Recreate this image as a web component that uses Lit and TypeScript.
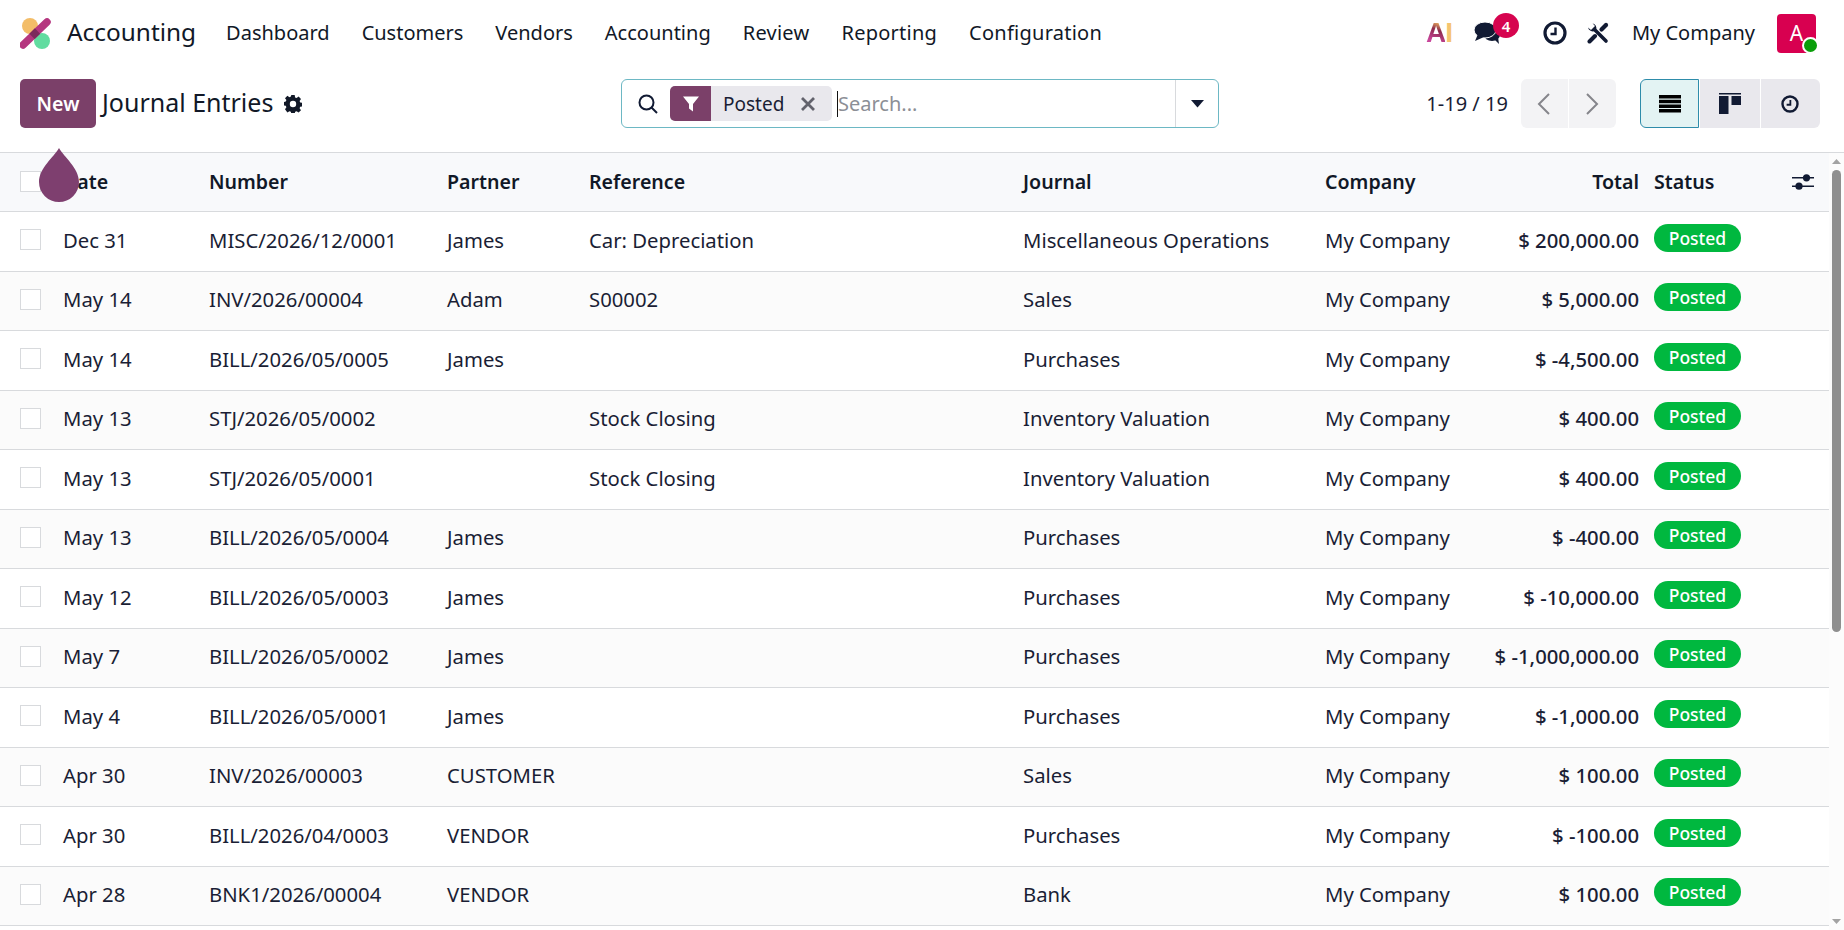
import { LitElement, html, css } from 'lit';
import { customElement } from 'lit/decorators.js';

interface Entry {
  date: string;
  number: string;
  partner: string;
  reference: string;
  journal: string;
  total: string;
}

const NAV_ITEMS = ['Dashboard', 'Customers', 'Vendors', 'Accounting', 'Review', 'Reporting', 'Configuration'];

const ENTRIES: Entry[] = [
  { date: 'Dec 31', number: 'MISC/2026/12/0001', partner: 'James', reference: 'Car: Depreciation', journal: 'Miscellaneous Operations', total: '$ 200,000.00' },
  { date: 'May 14', number: 'INV/2026/00004', partner: 'Adam', reference: 'S00002', journal: 'Sales', total: '$ 5,000.00' },
  { date: 'May 14', number: 'BILL/2026/05/0005', partner: 'James', reference: '', journal: 'Purchases', total: '$ -4,500.00' },
  { date: 'May 13', number: 'STJ/2026/05/0002', partner: '', reference: 'Stock Closing', journal: 'Inventory Valuation', total: '$ 400.00' },
  { date: 'May 13', number: 'STJ/2026/05/0001', partner: '', reference: 'Stock Closing', journal: 'Inventory Valuation', total: '$ 400.00' },
  { date: 'May 13', number: 'BILL/2026/05/0004', partner: 'James', reference: '', journal: 'Purchases', total: '$ -400.00' },
  { date: 'May 12', number: 'BILL/2026/05/0003', partner: 'James', reference: '', journal: 'Purchases', total: '$ -10,000.00' },
  { date: 'May 7', number: 'BILL/2026/05/0002', partner: 'James', reference: '', journal: 'Purchases', total: '$ -1,000,000.00' },
  { date: 'May 4', number: 'BILL/2026/05/0001', partner: 'James', reference: '', journal: 'Purchases', total: '$ -1,000.00' },
  { date: 'Apr 30', number: 'INV/2026/00003', partner: 'CUSTOMER', reference: '', journal: 'Sales', total: '$ 100.00' },
  { date: 'Apr 30', number: 'BILL/2026/04/0003', partner: 'VENDOR', reference: '', journal: 'Purchases', total: '$ -100.00' },
  { date: 'Apr 28', number: 'BNK1/2026/00004', partner: 'VENDOR', reference: '', journal: 'Bank', total: '$ 100.00' },
];

const clockIcon = (size: number) => html`
  <svg width=${size} height=${size} viewBox="0 0 24 24" fill="none" stroke="currentColor">
    <circle cx="12" cy="12" r="10" stroke-width="3.2" />
    <path d="M12.5 6.5v6.5H7.5" stroke-width="2.4" />
  </svg>
`;

@customElement('app-root')
export class AppRoot extends LitElement {
  static styles = css`
    :host {
      display: flex;
      flex-direction: column;
      height: 100vh;
      overflow: hidden;
      position: relative;
      background: #fff;
      color: #1a1e35;
      font-family: 'Noto Sans', 'Open Sans', sans-serif;
      font-size: 20px;
    }

    .navbar {
      flex: none;
      height: 66px;
      display: flex;
      align-items: center;
      padding: 0 28px 0 20px;
      color: #111827;
    }

    .logo {
      width: 32px;
      height: 32px;
      margin-top: 1px;
    }

    .app-name {
      margin: 0 30px 3px 15px;
      font-size: 24.4px;
    }

    .nav {
      display: flex;
      gap: 32px;
      margin-bottom: 2px;
    }

    .nav span:nth-child(n + 5) {
      letter-spacing: 0.25px;
    }

    .systray {
      margin-left: auto;
      display: flex;
      align-items: center;
    }

    .ai {
      width: 26px;
      font-family: 'Liberation Sans', sans-serif;
      font-size: 28px;
      font-weight: 700;
      line-height: 1;
      letter-spacing: -1px;
      display: flex;
      margin-top: -1px;
    }

    .ai-a {
      background: linear-gradient(20deg, #c8459a 25%, #8c2a4c 60%, #f0b860 85%);
      -webkit-background-clip: text;
      background-clip: text;
      color: transparent;
    }

    .ai-i {
      color: #f5c46f;
    }

    .chat {
      position: relative;
      margin-left: 22px;
      width: 28px;
      height: 22px;
      color: #111a33;
    }

    .chat-count {
      position: absolute;
      left: 19px;
      top: -9px;
      width: 26px;
      height: 25px;
      border-radius: 50%;
      background: #d6044f;
      color: #fff;
      font-size: 15px;
      font-weight: 600;
      display: flex;
      align-items: center;
      justify-content: center;
    }

    .clock {
      margin-left: 41px;
      display: flex;
      color: #111a33;
    }

    .tools {
      margin-left: 20px;
      display: flex;
    }

    .company {
      margin: 0 0 1px 23px;
    }

    .avatar {
      position: relative;
      margin-left: 22px;
      width: 39px;
      height: 39px;
      border-radius: 4px;
      background: #d80050;
      color: #fff;
      font-size: 21px;
      display: flex;
      align-items: center;
      justify-content: center;
    }

    .presence {
      position: absolute;
      right: -3px;
      bottom: -1px;
      width: 13px;
      height: 13px;
      border-radius: 50%;
      background: #0a9e0a;
      border: 2px solid #fff;
    }

    .control-panel {
      flex: none;
      height: 86px;
      box-sizing: border-box;
      padding: 13px 24px 0 20px;
      display: grid;
      grid-template-columns: 601px 598px 1fr;
      align-items: start;
    }

    .cp-left {
      display: flex;
      align-items: center;
      height: 49px;
    }

    .btn-new {
      width: 76px;
      height: 49px;
      border: none;
      border-radius: 5px;
      background: #7b4069;
      color: #fff;
      font: inherit;
      font-weight: 600;
      font-size: 19.6px;
      padding: 0;
    }

    .page-title {
      margin: 0 0 4px 6px;
      font-size: 25px;
      color: #111827;
    }

    .gear {
      margin-left: 11px;
      display: flex;
      color: #111827;
    }

    .search {
      height: 49px;
      box-sizing: border-box;
      border: 1px solid #6db8c4;
      border-radius: 6px;
      display: flex;
      align-items: center;
    }

    .search-icon {
      display: flex;
      margin-left: 15px;
      margin-right: 11px;
    }

    .facet {
      height: 35px;
      display: flex;
      align-items: center;
      border-radius: 5px;
      background: #e9e8ed;
      overflow: hidden;
    }

    .facet-icon {
      width: 41px;
      height: 100%;
      background: #7b4069;
      color: #fff;
      display: flex;
      align-items: center;
      justify-content: center;
    }

    .facet-label {
      margin-left: 12px;
      width: 62px;
      white-space: nowrap;
      font-size: 19px;
    }

    .facet-close {
      margin-left: 15px;
      margin-right: 16px;
      display: flex;
      color: #62626c;
    }

    .search-input {
      margin-left: 5px;
      flex: 1;
      height: 26px;
      border-left: 1px solid #111;
      color: #8c8f96;
      line-height: 26px;
    }

    .search-toggle {
      width: 42px;
      align-self: stretch;
      border-left: 1px solid #d8dadd;
      display: flex;
      align-items: center;
      justify-content: center;
    }

    .cp-right {
      display: flex;
      align-items: center;
      justify-content: flex-end;
      height: 49px;
    }

    .pager-value {
      margin-right: 13px;
      white-space: nowrap;
    }

    .pager {
      display: flex;
      gap: 1px;
      margin-right: 24px;
    }

    .pager-btn {
      width: 47px;
      height: 49px;
      background: #f3f3f5;
      color: #85858b;
      display: flex;
      align-items: center;
      justify-content: center;
    }

    .pager-btn:first-child {
      border-radius: 6px 0 0 6px;
    }

    .pager-btn:last-child {
      border-radius: 0 6px 6px 0;
    }

    .views {
      display: flex;
      gap: 1px;
    }

    .view-btn {
      width: 59.4px;
      height: 49px;
      box-sizing: border-box;
      background: #e9e8ed;
      color: #111a33;
      display: flex;
      align-items: center;
      justify-content: center;
    }

    .view-btn:first-child {
      border-radius: 6px 0 0 6px;
    }

    .view-btn:last-child {
      border-radius: 0 6px 6px 0;
    }

    .view-btn.active {
      background: #e3f3f3;
      border: 1px solid #2e8caa;
      color: #000;
    }

    .content {
      flex: 1;
      min-height: 0;
      display: flex;
      border-top: 1px solid #d8dadd;
    }

    .list {
      flex: 1;
      min-width: 0;
      overflow: hidden;
    }

    .scrollbar {
      flex: none;
      width: 15px;
      background: #fcfcfc;
      display: flex;
      flex-direction: column;
      box-sizing: border-box;
      padding: 0 3px;
    }

    .scroll-arrow {
      flex: none;
      height: 17px;
      display: flex;
      align-items: center;
    }

    .scroll-track {
      flex: 1;
    }

    .scroll-thumb {
      height: 462px;
      border-radius: 5px;
      background: #8f8f8f;
    }

    .row {
      height: 59.5px;
      box-sizing: border-box;
      border-bottom: 1px solid #d8dadd;
      display: grid;
      grid-template-columns: 43px 146px 238px 142px 434px 302px 131px 183px 15px 138px 1fr;
      align-items: center;
      padding-left: 20px;
      padding-bottom: 3px;
      white-space: nowrap;
      font-size: 20.3px;
    }

    .row.head {
      height: 59px;
      background: #f8f9fb;
      color: #111827;
      font-weight: 600;
      font-size: 19.6px;
      padding-bottom: 1px;
    }

    .row.striped {
      background: #fbfbfb;
    }

    .checkbox {
      width: 21px;
      height: 21px;
      box-sizing: border-box;
      border: 1px solid #d8dadd;
      background: #fff;
    }

    .num {
      text-align: right;
      font-weight: 500;
    }

    .head .num {
      font-weight: 600;
    }

    .status {
      grid-column: 10;
      display: flex;
    }

    .badge {
      display: flex;
      align-items: center;
      justify-content: center;
      width: 87px;
      height: 28px;
      margin-bottom: 4px;
      border-radius: 14px;
      background: #00b83f;
      color: #fff;
      font-size: 17.5px;
      font-weight: 500;
    }

    .adjust {
      display: flex;
      color: #111a33;
    }

    .ripple {
      position: absolute;
      left: 39px;
      top: 148px;
      width: 40px;
      height: 54px;
    }
  `;

  private _renderLogo() {
    return html`
      <svg class="logo" viewBox="0 0 32 32">
        <circle cx="10" cy="8" r="8" fill="#f3bd68" />
        <circle cx="22" cy="23" r="8" fill="#61dca0" />
        <path d="M3 27 27 4" stroke="#b5367f" stroke-width="7.5" stroke-linecap="round" />
        <path d="M12 18.4 17.5 13" stroke="#7c2a5c" stroke-width="7.5" />
      </svg>
    `;
  }

  private _renderNavbar() {
    return html`
      <header class="navbar">
        ${this._renderLogo()}
        <span class="app-name">Accounting</span>
        <nav class="nav">${NAV_ITEMS.map((item) => html`<span>${item}</span>`)}</nav>
        <div class="systray">
          <span class="ai"><span class="ai-a">A</span><span class="ai-i">I</span></span>
          <span class="chat">
            <svg width="28" height="22" viewBox="0 0 28 22" fill="currentColor">
              <ellipse cx="18" cy="13" rx="8" ry="6" />
              <path d="M20 17l5 5-1-7z" />
              <ellipse cx="11" cy="8" rx="11" ry="8" stroke="#fff" stroke-width="1" />
              <path d="M4 12 1 19 10 15z" />
            </svg>
            <span class="chat-count">4</span>
          </span>
          <span class="clock">${clockIcon(24)}</span>
          <span class="tools">
            <svg width="22" height="22" viewBox="0 0 22 22" fill="none" stroke="#111a33">
              <path d="M8 8 19 19" stroke-width="3.6" stroke-linecap="round" />
              <path d="M5.500 1.200 A5 5 0 0 1 9 8 L7.800 9 A5 5 0 0 1 1 5.500 L4 8 L8 4z" fill="#111a33" stroke="none" />
              <path d="M14.500 7.500 19 3" stroke-width="4.200" stroke-linecap="round" />
              <path d="M2.500 19.500 8 14" stroke-width="4" stroke-linecap="round" />
            </svg>
          </span>
          <span class="company">My Company</span>
          <span class="avatar">A<span class="presence"></span></span>
        </div>
      </header>
    `;
  }

  private _renderSearch() {
    return html`
      <div class="search">
        <span class="search-icon">
          <svg width="22" height="22" viewBox="0 0 22 22" fill="none" stroke="#111a33" stroke-width="2">
            <circle cx="9.500" cy="9.500" r="7" />
            <path d="M14.500 14.500 20 20" />
          </svg>
        </span>
        <div class="facet">
          <span class="facet-icon">
            <svg width="18" height="18" viewBox="0 0 18 18" fill="currentColor">
              <path d="M1 1.500h16L11 9v7.500L7 13.500V9z" />
            </svg>
          </span>
          <span class="facet-label">Posted</span>
          <span class="facet-close">
            <svg width="16" height="16" viewBox="0 0 16 16" stroke="currentColor" stroke-width="2.800">
              <path d="M2 2 14 14M14 2 2 14" />
            </svg>
          </span>
        </div>
        <div class="search-input">Search...</div>
        <div class="search-toggle">
          <svg width="13" height="8" viewBox="0 0 13 8" fill="#111a33"><path d="M0 0h13L6.500 7.500z" /></svg>
        </div>
      </div>
    `;
  }

  private _renderControlPanel() {
    return html`
      <section class="control-panel">
        <div class="cp-left">
          <button class="btn-new">New</button>
          <span class="page-title">Journal Entries</span>
          <span class="gear">
            <svg width="18" height="18" viewBox="0 0 18 18" fill="currentColor" fill-rule="evenodd">
              <path d="M7.300 0h3.400l.4 2.400 1.500.6 2-1.400 2.400 2.400-1.400 2 .6 1.500 2.400.4v3.400l-2.400.4-.6 1.500 1.400 2-2.400 2.400-2-1.400-1.500.6-.4 2.400H7.300l-.4-2.400-1.500-.6-2 1.400L1 14.200l1.400-2-.6-1.500L-.6 10.300V7l2.400-.4.600-1.500L1 3.200 3.400.8l2 1.400 1.500-.6zM9 5.800a3.200 3.200 0 1 0 0 6.400 3.200 3.200 0 0 0 0-6.400z" />
            </svg>
          </span>
        </div>
        ${this._renderSearch()}
        <div class="cp-right">
          <span class="pager-value">1-19 / 19</span>
          <div class="pager">
            <span class="pager-btn">
              <svg width="14" height="22" viewBox="0 0 14 22" fill="none" stroke="currentColor" stroke-width="2"><path d="M12 1 2 11l10 10" /></svg>
            </span>
            <span class="pager-btn">
              <svg width="14" height="22" viewBox="0 0 14 22" fill="none" stroke="currentColor" stroke-width="2"><path d="m2 1 10 10L2 21" /></svg>
            </span>
          </div>
          <div class="views">
            <span class="view-btn active">
              <svg width="22" height="18" viewBox="0 0 22 18" fill="currentColor">
                <path d="M0 0h22v3.500H0zM0 4.700h22v3.500H0zM0 9.400h22v3.500H0zM0 14.100h22v3.500H0z" />
              </svg>
            </span>
            <span class="view-btn">
              <svg width="22" height="21" viewBox="0 0 22 21" fill="currentColor">
                <path d="M0 0h22v1.500H0zM0 3h9.500v18H0zM12.500 3H22v9h-9.500z" />
              </svg>
            </span>
            <span class="view-btn">${clockIcon(18)}</span>
          </div>
        </div>
      </section>
    `;
  }

  private _renderRow(entry: Entry, index: number) {
    return html`
      <div class="row ${index % 2 === 1 ? 'striped' : ''}">
        <span class="checkbox"></span>
        <span>${entry.date}</span>
        <span>${entry.number}</span>
        <span>${entry.partner}</span>
        <span>${entry.reference}</span>
        <span>${entry.journal}</span>
        <span>My Company</span>
        <span class="num">${entry.total}</span>
        <span class="status"><span class="badge">Posted</span></span>
      </div>
    `;
  }

  private _renderScrollbar() {
    return html`
      <div class="scrollbar">
        <span class="scroll-arrow">
          <svg width="9" height="5" viewBox="0 0 9 5" fill="#a3a3a3"><path d="M4.500 0 9 5H0z" /></svg>
        </span>
        <div class="scroll-track"><div class="scroll-thumb"></div></div>
        <span class="scroll-arrow">
          <svg width="9" height="5" viewBox="0 0 9 5" fill="#a3a3a3"><path d="M0 0h9L4.500 5z" /></svg>
        </span>
      </div>
    `;
  }

  render() {
    return html`
      ${this._renderNavbar()}
      ${this._renderControlPanel()}
      <div class="content">
        <main class="list">
          <div class="row head">
            <span class="checkbox"></span>
            <span>Date</span>
            <span>Number</span>
            <span>Partner</span>
            <span>Reference</span>
            <span>Journal</span>
            <span>Company</span>
            <span class="num">Total</span>
            <span class="status">Status</span>
            <span class="adjust">
              <svg width="22" height="18" viewBox="0 0 22 18" fill="currentColor">
                <path d="M0 4h22v1.600H0zM0 12.400h22V14H0z" />
                <circle cx="14.500" cy="4.800" r="3.600" />
                <circle cx="7" cy="13.200" r="3.600" />
              </svg>
            </span>
          </div>
          ${ENTRIES.map((entry, index) => this._renderRow(entry, index))}
        </main>
        ${this._renderScrollbar()}
      </div>
      <svg class="ripple" viewBox="0 0 40 54">
        <path d="M20 0C25 9 40 20 40 34a20 20 0 0 1-40 0C0 20 15 9 20 0z" fill="#7e3f6f" />
      </svg>
    `;
  }
}
